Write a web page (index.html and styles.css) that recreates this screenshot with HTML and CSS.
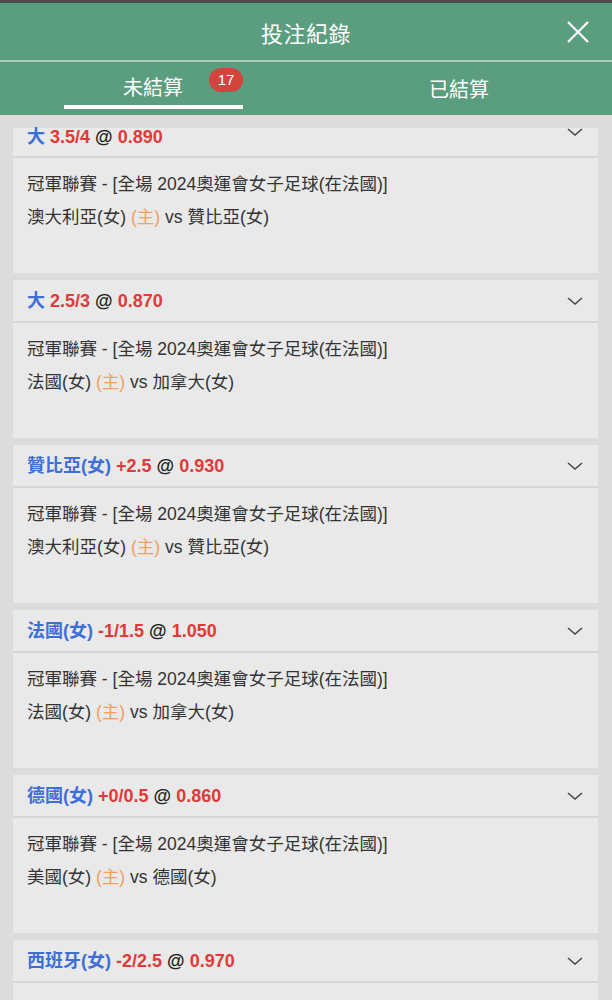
FILE: index.html
```html
<!DOCTYPE html>
<html lang="zh-Hant">
<head>
<meta charset="utf-8">
<title>投注紀錄</title>
<link rel="stylesheet" href="styles.css">
</head>
<body>
<div class="app">
  <div class="topline"></div>
  <header class="titlebar">
    <span></span>
    <h1 class="title">投注紀錄</h1>
    <button class="close" aria-label="close">
      <svg width="22" height="22" viewBox="0 0 22 22"><path d="M1 1 L21 21 M21 1 L1 21" stroke="#fff" stroke-width="2.2" fill="none"/></svg>
    </button>
  </header>
  <div class="divider"></div>
  <nav class="tabs">
    <div class="tab active"><span class="tab-label">未結算<span class="badge">17</span></span></div>
    <div class="tab"><span class="tab-label">已結算</span></div>
  </nav>
  <main class="list">
    <section class="card card--cut">
      <div class="card-head">
        <div class="bet"><span class="pick">大</span> <span class="odds">3.5/4</span> <span class="at">@</span> <span class="odds">0.890</span></div>
        <svg class="chev" width="16" height="8" viewBox="0 0 16 8"><path d="M1 1 L8 7 L15 1" stroke="#444" stroke-width="1.5" fill="none"/></svg>
      </div>
      <div class="card-body">
        <div>冠軍聯賽 - [全場 2024奧運會女子足球(在法國)]</div>
        <div>澳大利亞(女) <span class="home">(主)</span> vs 贊比亞(女)</div>
      </div>
    </section>
    <section class="card">
      <div class="card-head">
        <div class="bet"><span class="pick">大</span> <span class="odds">2.5/3</span> <span class="at">@</span> <span class="odds">0.870</span></div>
        <svg class="chev" width="16" height="8" viewBox="0 0 16 8"><path d="M1 1 L8 7 L15 1" stroke="#444" stroke-width="1.5" fill="none"/></svg>
      </div>
      <div class="card-body">
        <div>冠軍聯賽 - [全場 2024奧運會女子足球(在法國)]</div>
        <div>法國(女) <span class="home">(主)</span> vs 加拿大(女)</div>
      </div>
    </section>
    <section class="card">
      <div class="card-head">
        <div class="bet"><span class="pick">贊比亞(女)</span> <span class="odds">+2.5</span> <span class="at">@</span> <span class="odds">0.930</span></div>
        <svg class="chev" width="16" height="8" viewBox="0 0 16 8"><path d="M1 1 L8 7 L15 1" stroke="#444" stroke-width="1.5" fill="none"/></svg>
      </div>
      <div class="card-body">
        <div>冠軍聯賽 - [全場 2024奧運會女子足球(在法國)]</div>
        <div>澳大利亞(女) <span class="home">(主)</span> vs 贊比亞(女)</div>
      </div>
    </section>
    <section class="card">
      <div class="card-head">
        <div class="bet"><span class="pick">法國(女)</span> <span class="odds">-1/1.5</span> <span class="at">@</span> <span class="odds">1.050</span></div>
        <svg class="chev" width="16" height="8" viewBox="0 0 16 8"><path d="M1 1 L8 7 L15 1" stroke="#444" stroke-width="1.5" fill="none"/></svg>
      </div>
      <div class="card-body">
        <div>冠軍聯賽 - [全場 2024奧運會女子足球(在法國)]</div>
        <div>法國(女) <span class="home">(主)</span> vs 加拿大(女)</div>
      </div>
    </section>
    <section class="card">
      <div class="card-head">
        <div class="bet"><span class="pick">德國(女)</span> <span class="odds">+0/0.5</span> <span class="at">@</span> <span class="odds">0.860</span></div>
        <svg class="chev" width="16" height="8" viewBox="0 0 16 8"><path d="M1 1 L8 7 L15 1" stroke="#444" stroke-width="1.5" fill="none"/></svg>
      </div>
      <div class="card-body">
        <div>冠軍聯賽 - [全場 2024奧運會女子足球(在法國)]</div>
        <div>美國(女) <span class="home">(主)</span> vs 德國(女)</div>
      </div>
    </section>
    <section class="card">
      <div class="card-head">
        <div class="bet"><span class="pick">西班牙(女)</span> <span class="odds">-2/2.5</span> <span class="at">@</span> <span class="odds">0.970</span></div>
        <svg class="chev" width="16" height="8" viewBox="0 0 16 8"><path d="M1 1 L8 7 L15 1" stroke="#444" stroke-width="1.5" fill="none"/></svg>
      </div>
      <div class="card-body"></div>
    </section>
  </main>
</div>
</body>
</html>
```
FILE: styles.css
```css
* { box-sizing: border-box; }
html, body { margin: 0; padding: 0; }
body {
  width: 612px;
  height: 1000px;
  overflow: hidden;
  background: #dcdcdc;
  font-family: "Liberation Sans", "Noto Sans CJK TC", sans-serif;
  color: #333;
}
.app { display: flex; flex-direction: column; height: 1000px; overflow: hidden; }
.topline { height: 3px; background: #4d4f4e; flex-shrink: 0; }
.titlebar {
  height: 57px;
  flex-shrink: 0;
  background: #5a9e7f;
  display: grid;
  grid-template-columns: 1fr auto 1fr;
  align-items: center;
}
.title {
  margin: 0;
  font-size: 22px;
  font-weight: 400;
  color: #fff;
  letter-spacing: 0.5px;
}
.close {
  justify-self: end;
  margin-right: 23px;
  padding: 0;
  border: 0;
  background: none;
  display: flex;
}
.divider { height: 2px; background: #a8cfbb; flex-shrink: 0; }
.tabs {
  height: 53px;
  flex-shrink: 0;
  background: #5a9e7f;
  display: grid;
  grid-template-columns: 1fr 1fr;
}
.tab {
  display: flex;
  flex-direction: column;
  align-items: center;
  color: #fff;
  font-size: 20px;
  padding-top: 14px;
}
.tab:not(.active) { padding-top: 16px; }
.tab-label { position: relative; line-height: 24px; }
.tab.active::after {
  content: "";
  width: 179px;
  height: 4px;
  background: #fff;
  margin-top: 5px;
}
.badge {
  position: absolute;
  left: calc(100% + 26px);
  top: -8px;
  width: 34px;
  height: 24px;
  border-radius: 12px;
  background: #d2453f;
  color: #fff;
  font-size: 15px;
  line-height: 24px;
  text-align: center;
}
.list {
  padding: 13px 14px 0 13px;
  display: flex;
  flex-direction: column;
  gap: 7px;
  overflow: hidden;
}
.card { background: #e9e9e9; flex-shrink: 0; }
.card-head {
  height: 43px;
  display: flex;
  align-items: center;
  justify-content: space-between;
  padding: 0 15px 0 14px;
  border-bottom: 2px solid #d6d6d6;
}
.card--cut .card-head {
  height: 30px;
  align-items: flex-start;
}
.card--cut .bet { margin-top: -1px; }
.bet { font-size: 18px; font-weight: 700; line-height: 20px; white-space: nowrap; }
.pick { color: #3d6fd9; }
.odds { color: #e03a3a; }
.at { color: #222; }
.card-body {
  height: 115px;
  padding: 10px 14px 0 14px;
  font-size: 17.5px;
  line-height: 33px;
  color: #333;
  white-space: nowrap;
}
.home { color: #f0a060; }
```
